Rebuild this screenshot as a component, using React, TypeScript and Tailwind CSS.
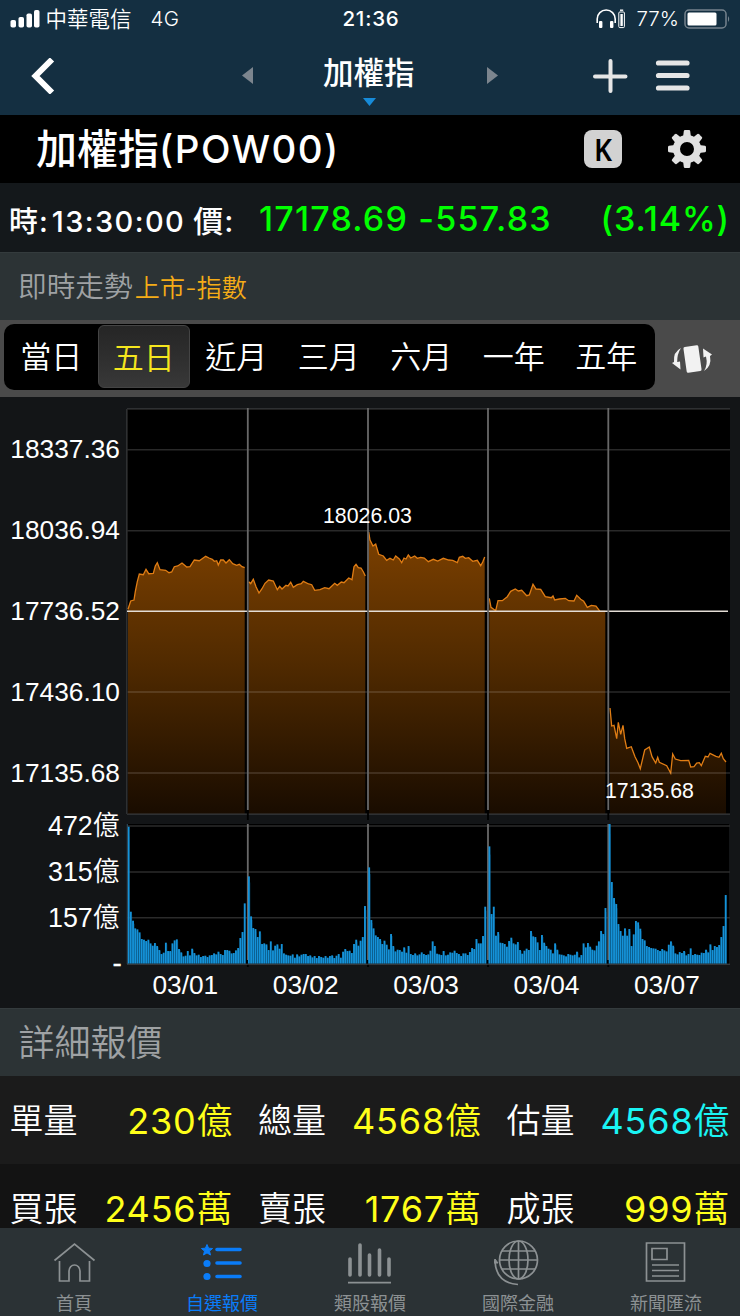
import type { ReactNode } from "react";

const DAYS = ["03/01", "03/02", "03/03", "03/04", "03/07"];
const PRICE_LEVELS = ["18337.36", "18036.94", "17736.52", "17436.10", "17135.68"];
const VOLUME_LEVELS = ["472億", "315億", "157億"];

const PERIODS = ["當日", "五日", "近月", "三月", "六月", "一年", "五年"];
const ACTIVE_PERIOD = "五日";

// One polyline per trading day
const PRICE_LINES = [
  "128,609.3 130.7,601 134,600 135.3,591.7 137.3,581.7 139.3,574 143.3,574.7 146,569.3 148.7,573.7 153.3,573.3 155.3,566 157.3,562.7 160,569.7 165.7,570.3 169,572.7 171.7,572 174.3,566.7 177.7,566 182,563 186.7,567 190,566.7 194.3,560 199.3,560.7 205.7,556.3 209,558 212.3,559.3 214.3,561.3 216.7,560.7 218.3,565 220.7,560 223.3,560 226,563 229.3,559.7 232.7,563.7 236.7,565.3 239.3,564.3 242,566.7 244.7,567.7",
  "248.7,581.7 250.7,583.7 253.3,579.3 256,586.7 259,593 262,588.7 265,583.3 268.7,580 273.3,581 277.3,589.7 279.7,586.3 282,589 286,585.3 288,586 290.7,582.3 293.3,587.3 297.3,584.7 301.3,583.7 303.3,581.3 308.7,584 311.7,584.7 314.7,590.3 320,589.7 324.7,587.7 329,588.7 334.7,583.3 337.3,585.3 341.3,582 344,582.7 348.7,578 352,579.7 354,566.7 356,564.3 358.3,567.7 361,568 363.3,571.7 365.3,576",
  "368.7,532 370,540 373,546 375.7,544 378.7,554.3 383.3,556 386.7,560.3 390,558.3 393.3,560 395.7,556 399.3,559 401.7,562.7 404,558 406,559 408.3,555 410.7,558 414.7,556 417.3,558.3 420.7,557.3 424.3,558 428.3,561.7 433.3,559.3 437.7,561 443.3,558.3 448.7,560 452.7,560.3 457.3,562.7 459.3,557.3 462.7,556.3 465.3,558.3 468.7,557.7 472.7,561.3 477.3,560.3 480.7,565.7 482.7,562 484.7,557",
  "489.3,598.3 491,607.3 495.7,610.7 498,600.7 502.3,600.7 507.3,596.7 510.7,591.3 515.3,589 518.3,591 521.7,590.3 526.7,595.7 529.3,595 533,584.3 536,589 540.7,589.3 545.3,596.7 551.3,597.7 553,596 554.7,600 559.3,599 565.3,598.3 568.7,600.7 574,601 576.7,595.3 580.7,599.3 583.7,601.3 587.3,607.3 591.3,605.3 596,606 600,611.3 605.3,611.3",
  "610,708 611.7,726 614,725.3 616.7,738.7 618.3,722.3 620.7,734.3 623,725.3 624.7,738.7 626.7,748.3 631.3,746.7 635,756.7 638,762.7 640.3,768.7 644.7,750 649.3,747 652,756.7 655.7,763 657.7,757.3 659.3,762.3 666.7,765.7 670.7,773 672.7,754 675.3,759 680.7,760.7 688.7,760.3 690.7,767 694,766.7 696.7,763 699.3,762.7 701.3,765.7 705.3,756.3 708,757 710,753.3 716,756.3 719,757.3 721.3,753.3 723.3,758.7 726,762",
];

// Five-minute volumes, as the height left empty above each bar (0 to 491)
const VOLUME_TOPS = [
  [80, 335, 362, 385, 388, 397, 417, 419, 423, 419, 430, 437, 429, 438, 450, 462, 458, 428, 453, 453, 430, 421, 418, 447, 457, 469, 467, 453, 466, 446, 459, 466, 464, 471, 468, 467, 471, 466, 465, 460, 463, 455, 462, 465, 450, 450, 452, 460, 459, 451, 444, 414, 396, 310],
  [229, 349, 384, 387, 411, 394, 432, 430, 433, 450, 424, 451, 437, 433, 446, 432, 460, 464, 466, 467, 463, 473, 463, 469, 464, 462, 462, 468, 466, 472, 468, 474, 468, 471, 473, 468, 473, 468, 466, 474, 467, 462, 473, 455, 447, 453, 452, 459, 432, 419, 437, 422, 411, 318],
  [202, 360, 385, 406, 411, 417, 432, 422, 434, 448, 402, 438, 454, 449, 450, 455, 442, 458, 438, 462, 465, 460, 466, 463, 457, 462, 465, 463, 452, 424, 438, 461, 463, 465, 453, 466, 464, 457, 458, 452, 459, 462, 468, 460, 460, 465, 456, 444, 447, 417, 430, 430, 408, 320],
  [139, 342, 320, 407, 396, 428, 429, 432, 440, 423, 413, 430, 433, 426, 450, 461, 452, 446, 450, 393, 409, 411, 427, 450, 405, 428, 438, 446, 449, 460, 430, 449, 463, 464, 466, 469, 462, 464, 466, 464, 455, 472, 465, 430, 442, 429, 440, 449, 451, 437, 424, 393, 402, 324],
  [72, 246, 294, 312, 372, 393, 407, 385, 407, 387, 438, 403, 363, 367, 386, 417, 421, 438, 441, 444, 445, 446, 450, 453, 447, 451, 454, 434, 424, 437, 460, 463, 456, 459, 453, 466, 462, 445, 465, 462, 464, 465, 458, 459, 449, 457, 433, 450, 438, 441, 435, 411, 378, 285],
];

const QUOTES = [
  [
    { label: "單量", value: "230", unit: "億", color: "text-[#ffff1a]" },
    { label: "總量", value: "4568", unit: "億", color: "text-[#ffff1a]" },
    { label: "估量", value: "4568", unit: "億", color: "text-[#1af4f4]" },
  ],
  [
    { label: "買張", value: "2456", unit: "萬", color: "text-[#ffff1a]" },
    { label: "賣張", value: "1767", unit: "萬", color: "text-[#ffff1a]" },
    { label: "成張", value: "999", unit: "萬", color: "text-[#ffff1a]" },
  ],
];

function StatusBar() {
  return (
    <div className="flex h-[38px] items-center pl-[10px] pr-[9px] text-[20.5px]">
      <div className="flex flex-1 items-center">
        <svg width="30" height="18" viewBox="0 0 30 18" fill="#fff">
          <rect x="0.5" y="10" width="5.5" height="7.5" rx="1.8" />
          <rect x="8.5" y="7" width="5.5" height="10.5" rx="1.8" />
          <rect x="16.5" y="3.5" width="5.5" height="14" rx="1.8" />
          <rect x="24" y="0" width="5.5" height="17.5" rx="1.8" />
        </svg>
        <span className="ml-[5.5px] text-[21.5px] font-[350]">中華電信</span>
        <span className="ml-[19px] font-[350] tracking-[0.4px]">4G</span>
      </div>
      <span className="ml-px font-medium tracking-[0.8px]">21:36</span>
      <div className="flex flex-1 items-center justify-end">
        <svg width="30" height="20" viewBox="0 0 30 20" fill="none" stroke="#fff">
          <path d="M1.2 14V10a9 9 0 0 1 18 0v4" strokeWidth="1.6" />
          <rect x="3" y="12" width="3.4" height="7" rx="1" fill="#fff" stroke="none" />
          <rect x="14" y="12" width="3.4" height="7" rx="1" fill="#fff" stroke="none" />
          <rect x="22.8" y="3" width="5.6" height="15.6" rx="1" strokeWidth="1" />
          <rect x="24.4" y="5" width="2.4" height="12" fill="#fff" stroke="none" />
          <path d="M24 1.2h3.2" strokeWidth="1.4" />
        </svg>
        <span className="ml-[10px] text-[20.5px] font-[350]">77%</span>
        <svg className="ml-[5px]" width="47" height="20" viewBox="0 0 47 20">
          <rect x="1" y="1" width="41" height="18" rx="4" fill="none" stroke="#75838d" strokeWidth="1.5" />
          <rect x="3.5" y="3.5" width="29" height="13" rx="1.5" fill="#fff" />
          <path d="M44 7q2.4 3 0 6z" fill="#75838d" />
        </svg>
      </div>
    </div>
  );
}

function NavBar() {
  return (
    <div className="flex h-[77px] items-center pb-[2px]">
      <svg className="ml-[31px]" width="24" height="36" viewBox="0 0 24 36" fill="none">
        <path d="M21 1.5 4.5 18 21 34.5" stroke="#fff" strokeWidth="6" />
      </svg>
      <svg className="ml-[187px]" width="11" height="17" viewBox="0 0 11 17">
        <path d="M11 0v17L0 8.5z" fill="#7c858e" />
      </svg>
      <div className="relative ml-[70px] -mt-[6px] w-[94px] text-[30.5px] leading-[46px] font-medium">
        加權指
        <svg className="absolute top-[31px] left-[40px]" width="13" height="26" viewBox="0 -17 13 26">
          <path d="M0 0h13L6.5 8z" fill="#178bd8" />
        </svg>
      </div>
      <svg className="ml-[70px]" width="11" height="17" viewBox="0 0 11 17">
        <path d="M0 0v17l11-8.5z" fill="#7c858e" />
      </svg>
      <svg className="ml-[94px]" width="36" height="36" viewBox="0 0 36 36" stroke="#e6e6e6" strokeWidth="4" strokeLinecap="round">
        <path d="M18.500 3v30M3 18.500h30.500" />
      </svg>
      <svg className="ml-[27px]" width="36" height="34" viewBox="0 0 36 34" stroke="#e6e6e6" strokeWidth="5.2" strokeLinecap="round">
        <path d="M3.500 4h28.500M3.500 16.500h28.500M3.500 29h28.500" />
      </svg>
    </div>
  );
}

function StockTitle() {
  return (
    <div className="flex h-[68px] items-center bg-black pl-[36px]">
      <h1 className="flex flex-1 items-baseline font-medium">
        <span className="text-[41px] leading-[60px]">加權指</span>
        <span className="relative -top-px text-[38.5px] tracking-[1.4px]">(POW00)</span>
      </h1>
      <div className="flex size-[38px] items-center justify-center rounded-[8px] bg-[#d2d2d2] font-['Noto_Sans'] text-[31px] leading-none font-semibold text-black">
        <span className="scale-x-90">K</span>
      </div>
      <svg className="mr-[33px] ml-[45px]" width="40" height="40" viewBox="-20 -20 40 40" fill="#e0e0e0">
        {[0, 45, 90, 135, 180, 225, 270, 315].map((angle) => (
          <path key={angle} d="M-4.200-10-3.200-18q.2-1 1.200-1h4q1 0 1.200 1l1 8z" transform={`rotate(${angle})`} />
        ))}
        <circle r="10.5" fill="none" stroke="#e0e0e0" strokeWidth="7" />
      </svg>
    </div>
  );
}

function PriceBar() {
  return (
    <div className="flex h-[69px] items-center bg-[#14181b] pt-[2px] pr-[11px] pl-[9px] font-medium">
      <div className="flex w-[250px] items-baseline pt-[5px] text-[29px] leading-[44px] whitespace-pre">
        <span className="tracking-[1px]">時:</span>
        <span className="ml-[3px] tracking-[1.4px]">13:30:00</span>
        <span className="ml-[8px] text-[30px] tracking-[1px]">價:</span>
      </div>
      <span className="flex-1 text-[34px] tracking-[1.2px] text-[#0f0]">17178.69 -557.83</span>
      <span className="-mr-px text-[34px] tracking-[0.9px] text-[#0f0]">(3.14%)</span>
    </div>
  );
}

function PeriodTabs() {
  return (
    <div className="flex h-[77px] items-center bg-[#4a4a4a] pl-[4px]">
      <div className="mb-[3px] flex h-[66px] w-[651px] rounded-[10px] bg-black pt-px pl-px">
        {PERIODS.map((period) => (
          <button
            key={period}
            className={
              period === ACTIVE_PERIOD
                ? "h-[63px] w-[92.5px] rounded-[6px] border border-[#444] bg-linear-to-b from-[#252525] to-[#383838] pt-[3px] text-[31px] font-[350] text-[#f5e61e]"
                : "h-[63px] w-[92.5px] pt-[2px] text-[31px] font-[350]"
            }
          >
            {period}
          </button>
        ))}
      </div>
      <svg className="ml-[17px]" width="42" height="32" viewBox="0 0 42 32" fill="#f2f2f2">
        <rect x="13" y="3" width="15" height="26" rx="1.5" transform="rotate(-8 20.500 16)" />
        <path d="M9 5Q1 9 2 19L0 20l8.500 6.500-.5-8-2.800.6Q5 11 9 5z" />
        <path d="M32 28q8-5 6-15l2-1.500-9-6 .5 9 2.500-1Q36 22 32 28z" />
      </svg>
    </div>
  );
}

function Chart() {
  return (
    <svg className="block bg-[#131517]" width="740" height="611" viewBox="0 397 740 611">
      <defs>
        <linearGradient id="area" gradientUnits="userSpaceOnUse" x1="0" y1="532" x2="0" y2="814">
          <stop offset="0" stopColor="#7c4000" />
          <stop offset="0.45" stopColor="#522b00" />
          <stop offset="1" stopColor="#190c00" />
        </linearGradient>
      </defs>

      {/* Price */}
      <rect x="127" y="409" width="603" height="405" fill="#000" />
      {PRICE_LINES.map((points, i) => {
        const left = points.split(",")[0];
        const right = points.split(" ").pop()?.split(",")[0];
        return (
          <g key={DAYS[i]}>
            <polygon points={`${left},813.5 ${points} ${right},813.5`} fill="url(#area)" />
            <polyline points={points} fill="none" stroke="#e07d14" strokeWidth="1.3" />
          </g>
        );
      })}
      <path
        d="M127 409H730M127 449.700H730M127 530.700H730M127 692H730M127 773H730M127 814H730M127 409V814"
        stroke="#fff"
        strokeOpacity="0.16"
        strokeWidth="1.5"
      />
      <path d="M127 611.300H728" stroke="#e4ddd5" strokeWidth="1.4" />

      {/* Volume */}
      <path d="M127.500 824H729V964H127.500z" fill="#000" />
      <path d="M127 826H730M127 872H730M127 917.700H730" stroke="#2b2b2b" strokeWidth="1.5" />

      {[247.8, 368, 488, 608.3].map((x) => (
        <g key={x} strokeWidth="1.8">
          <path d={`M${x} 810v10M${x} 958v9`} stroke="#000" />
          <path d={`M${x} 408V810M${x} 824V960`} stroke="#686868" />
        </g>
      ))}

      {VOLUME_TOPS.map((tops, day) =>
        tops.map((top, i) => {
          const x = 128.5 + day * 120.25 + i * 2.19;
          const height = (491 - top) / 3;
          return (
            <g key={`${day}-${i}`}>
              <rect x={x - 0.8} y={963.7 - height} width="1.9" height={height} fill="#1592d8" />
              <rect x={x + 1.1} y={963.7 - height * 0.93} width="0.3" height={height * 0.93} fill="#0d6aa2" />
            </g>
          );
        }),
      )}
      <path d="M127 964.200H730" stroke="#44494c" />
      <path d="M127.300 824V964" stroke="#315063" />

      <g fill="#fff" className="font-['Liberation_Sans','Noto_Sans_CJK_TC',sans-serif]" fontSize="26.300">
        {PRICE_LEVELS.map((level, i) => (
          <text key={level} x="120" y={458.3 + i * 80.9} textAnchor="end">
            {level}
          </text>
        ))}
        {VOLUME_LEVELS.map((level, i) => (
          <text key={level} x="119.500" y={834.8 + i * 45.9} textAnchor="end" fontSize="26.800" fontWeight="350">
            {level}
          </text>
        ))}
        <text x="121.500" y="971.500" textAnchor="end" strokeWidth="0.6" stroke="#fff">-</text>
        {DAYS.map((day, i) => (
          <text key={day} x={185.3 + i * 120.4} y="993.700" textAnchor="middle">
            {day}
          </text>
        ))}
        <text x="323" y="523" fontSize="21.300">18026.03</text>
        <text x="605" y="798" fontSize="21.300">17135.68</text>
      </g>
    </svg>
  );
}

function QuoteRow({ quotes, className }: { quotes: (typeof QUOTES)[number]; className: string }) {
  return (
    <div className={`flex gap-[26.500px] pl-[9.500px] ${className}`}>
      {quotes.map(({ label, value, unit, color }) => (
        <div key={label} className="flex h-[40px] w-[222px] items-center justify-between font-[350]">
          <span className="pt-[2px] text-[34px] leading-[40px]">{label}</span>
          <span className={`-mr-px flex items-baseline pt-px text-[36px] leading-[40px] ${color}`}>
            <span className="font-[380] tracking-[0.8px]">{value}</span>
            <span>{unit}</span>
          </span>
        </div>
      ))}
    </div>
  );
}

function TabItem({ label, active, children }: { label: string; active?: boolean; children: ReactNode }) {
  return (
    <button className={`flex flex-1 flex-col items-center pt-[12px] pr-px ${active ? "text-[#0a7cf8]" : "text-[#8c9193]"}`}>
      <svg width="48" height="46" viewBox="0 0 48 46" fill="none" stroke="currentColor" strokeWidth="1.7">
        {children}
      </svg>
      <span className="mt-[6px] ml-px text-[18px] leading-[24px]">{label}</span>
    </button>
  );
}

function TabBar() {
  return (
    <nav className="flex h-[88px] bg-[#2b3235]">
      <TabItem label="首頁">
        <path d="m4.500 20.500 20-16.500 20 16.500M9.500 21v20H19V31a5.500 6 0 0 1 11 0v10h9.500V21" />
      </TabItem>
      <TabItem label="自選報價" active>
        <path d="M19 9.500h23M19 23h23M19 36.500h23" strokeWidth="3.6" strokeLinecap="round" />
        <path d="m9 4.500 1.600 3.700 4 .3-3.100 2.600 1 3.900L9 12.900 5.500 15l1-3.900L3.400 8.500l4-.3z" fill="currentColor" strokeWidth="1" />
        <circle cx="9" cy="23.5" r="3.6" fill="currentColor" stroke="none" />
        <circle cx="9" cy="36.5" r="3.6" fill="currentColor" stroke="none" />
      </TabItem>
      <TabItem label="類股報價">
        <path d="M4 19v16M14 5v30M23.500 15v20M33.500 10v25M43 19v16" strokeWidth="3.6" strokeLinecap="round" />
        <path d="M2 42.700h43" />
      </TabItem>
      <TabItem label="國際金融">
        <circle cx="24.500" cy="20" r="19" />
        <ellipse cx="24.500" cy="20" rx="9.5" ry="19" />
        <path d="M24.500 1v38M5.500 20h38M8 11h33M8 29h33" />
        <path d="M1 21q1 22 23 23.500" />
        <path d="M-1 23 1 19l3 4z" fill="currentColor" strokeWidth="1" />
      </TabItem>
      <TabItem label="新聞匯流">
        <path d="M4.500 3h38v38h-38zM10 8.500h15v11H10zM10 25h27M10 30.500h27M10 36h27" />
      </TabItem>
    </nav>
  );
}

export default function App() {
  return (
    <div className="flex h-[1316px] w-[740px] flex-col overflow-hidden bg-[#131313] font-['Inter','Noto_Sans_CJK_TC',sans-serif] text-white">
      <header className="bg-[#142f41]">
        <StatusBar />
        <NavBar />
      </header>
      <StockTitle />
      <PriceBar />
      <div className="flex h-[68px] items-baseline border-t border-[#343b3d] bg-[#2c3335] pl-[18px] font-[350] leading-[68px]">
        <span className="text-[28.7px] text-[#9fa2a4]">即時走勢</span>
        <span className="ml-[2px] text-[25px] tracking-[0.2px] text-[#f5ac17]">上市-指數</span>
      </div>
      <PeriodTabs />
      <Chart />
      <h2 className="h-[68px] border-t border-[#343b3d] bg-[#2c3335] pl-[18.500px] text-[36px] leading-[69px] font-[350] text-[#9fa2a4]">
        詳細報價
      </h2>
      <QuoteRow quotes={QUOTES[0]} className="h-[88px] bg-[#1b1b1b] pt-[24px]" />
      <QuoteRow quotes={QUOTES[1]} className="h-[64px] bg-[#131313] pt-[24px]" />
      <TabBar />
    </div>
  );
}
